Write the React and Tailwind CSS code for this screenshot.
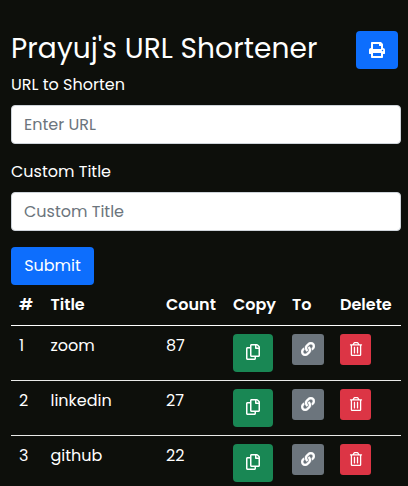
import { FaPrint, FaRegCopy, FaLink, FaRegTrashAlt } from "react-icons/fa";

const links = [
  { id: 1, title: "zoom", count: 87 },
  { id: 2, title: "linkedin", count: 27 },
  { id: 3, title: "github", count: 22 },
];

const columns = "grid grid-cols-[31.5px_115.5px_67px_59px_48px_69px] *:pl-2";

function Field({ label, placeholder }) {
  return (
    <label className="mb-4 block">
      <span className="mb-2 block h-6">{label}</span>
      <input
        placeholder={placeholder}
        className="block h-[39px] w-full rounded-[4px] border border-[#ced4da] bg-white px-3 text-[#212529] placeholder:text-[#6c757d] placeholder:opacity-100"
      />
    </label>
  );
}

export default function App() {
  return (
    <main className="h-[486px] overflow-hidden bg-[#0d0f0b] pt-[31px] pr-[7px] pl-[11px] font-['Poppins','Inter',sans-serif] text-base leading-6 text-white">
      <header className="flex h-[42px] items-start justify-between pr-[3px]">
        <h1 className="pt-px text-[28px] leading-[34px] tracking-[0.1px] whitespace-nowrap">Prayuj's URL Shortener</h1>
        <button className="flex h-[38px] w-[42px] items-center justify-center rounded-[4px] bg-[#0d6efd]">
          <FaPrint size={16} />
        </button>
      </header>
      <form>
        <Field label="URL to Shorten" placeholder="Enter URL" />
        <Field label="Custom Title" placeholder="Custom Title" />
        <button type="button" className="block h-[38px] w-[83px] rounded-[4px] bg-[#0d6efd]">
          Submit
        </button>
      </form>
      <section>
        <div className={columns + " h-[41px] border-b border-white pt-2 font-semibold"}>
          <span>#</span>
          <span>Title</span>
          <span>Count</span>
          <span>Copy</span>
          <span>To</span>
          <span>Delete</span>
        </div>
        {links.map((link) => (
          <div key={link.id} className={columns + " h-[55px] border-b border-[#e9eae8] pt-2"}>
            <span>{link.id}</span>
            <span>{link.title}</span>
            <span>{link.count}</span>
            <span>
              <button className="flex h-[38px] w-10 items-center justify-center rounded-[4px] bg-[#198754] pr-px pb-[2px]">
                <FaRegCopy size={16} />
              </button>
            </span>
            <span>
              <button className="flex h-[31px] w-8 items-center justify-center rounded-[3px] bg-[#6c757d] pb-[2px]">
                <FaLink size={14} stroke="currentColor" strokeWidth={12} />
              </button>
            </span>
            <span>
              <button className="flex h-[31px] w-[31px] items-center justify-center rounded-[3px] bg-[#dc3545] pb-[2px]">
                <FaRegTrashAlt size={14} />
              </button>
            </span>
          </div>
        ))}
      </section>
    </main>
  );
}
